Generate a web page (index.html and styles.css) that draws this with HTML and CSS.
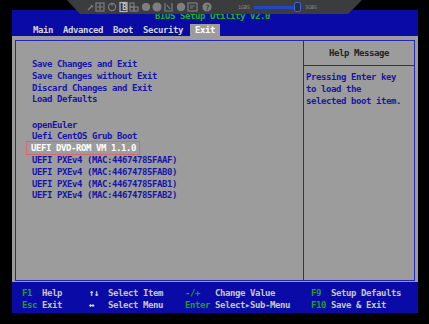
FILE: index.html
```html
<!DOCTYPE html>
<html lang="en">
<head>
    <meta charset="UTF-8">
    <meta name="viewport" content="width=device-width, initial-scale=1.0">
    <title>BIOS Setup Utility</title>
    <link rel="stylesheet" href="styles.css">
</head>
<body>
    <div class="screen">
        <header class="bios-head">
            <div class="title">BIOS Setup Utility V2.0</div>
            <nav class="tabs">
                <span class="tab">Main</span>
                <span class="tab">Advanced</span>
                <span class="tab">Boot</span>
                <span class="tab">Security</span>
                <span class="tab active">Exit</span>
            </nav>
        </header>
        <main class="bios-body">
            <div class="frame">
                <section class="menu">
                    <div class="item">Save Changes and Exit</div>
                    <div class="item">Save Changes without Exit</div>
                    <div class="item">Discard Changes and Exit</div>
                    <div class="item">Load Defaults</div>
                    <div class="gap"></div>
                    <div class="item">openEuler</div>
                    <div class="item">Uefi CentOS Grub Boot</div>
                    <div class="item"><span class="sel">UEFI DVD-ROM VM 1.1.0</span></div>
                    <div class="item">UEFI PXEv4 (MAC:44674785FAAF)</div>
                    <div class="item">UEFI PXEv4 (MAC:44674785FAB0)</div>
                    <div class="item">UEFI PXEv4 (MAC:44674785FAB1)</div>
                    <div class="item">UEFI PXEv4 (MAC:44674785FAB2)</div>
                </section>
                <aside class="help">
                    <div class="help-title">Help Message</div>
                    <div class="help-text">Pressing Enter key<br>to load the<br>selected boot item.</div>
                </aside>
            </div>
        </main>
        <footer class="keys">
            <span class="key">F1</span><span class="desc">Help</span>
            <span class="key arrow">&uarr;&darr;</span><span class="desc">Select Item</span>
            <span class="key">-/+</span><span class="desc">Change Value</span>
            <span class="key">F9</span><span class="desc">Setup Defaults</span>

            <span class="key">Esc</span><span class="desc">Exit</span>
            <span class="key arrow">&harr;</span><span class="desc">Select Menu</span>
            <span class="key">Enter</span><span class="desc">Select&#9656;Sub-Menu</span>
            <span class="key">F10</span><span class="desc">Save &amp; Exit</span>
        </footer>
    </div>

    <!-- remote console toolbar floating over the screen -->
    <div class="toolbar">
        <svg class="icons" width="130" height="12" viewBox="0 0 130 12">
            <g fill="none" stroke="#7c7e80" stroke-width="1.2">
                <path d="M2 9 L6 5 M5 4 L7 6" />
                <rect x="10" y="2" width="8" height="8" />
                <path d="M11 6 H17 M14 3 V9" />
                <circle cx="26" cy="6" r="3.6" />
                <path d="M26 2 V5" />
                <rect x="34" y="1.5" width="7" height="9" stroke="#b8b8b8" />
                <rect x="44" y="2" width="4" height="4" />
                <rect x="48" y="6" width="4" height="4" />
                <rect x="44" y="6" width="4" height="4" />
                <circle cx="60" cy="6" r="3.5" fill="#7c7e80" />
                <circle cx="71" cy="6" r="4" fill="#7c7e80" />
                <path d="M79 2 V10 H86 V2 M81 4 L84 8" />
                <circle cx="95" cy="6" r="3.6" fill="#7c7e80" />
                <rect x="102" y="2" width="9" height="8" />
                <path d="M104 5 H109 M104 7 H107" />
                <circle cx="121" cy="6" r="4" fill="#7c7e80" />
            </g>
            <text x="36.2" y="8.8" class="b-glyph">B</text>
            <text x="119.4" y="8.5" class="q-glyph">?</text>
        </svg>
        <span class="speed">1GBS</span>
        <span class="slider"><span class="track"></span><span class="knob"></span></span>
        <span class="speed">3GBS</span>
    </div>
</body>
</html>
```
FILE: styles.css
```css
body {
    margin: 0;
    background-color: #000000;
    font-family: 'DejaVu Sans Mono', 'Liberation Mono', monospace;
    font-weight: bold;
    font-size: 9px;
    letter-spacing: -0.42px;
}
.screen {
    width: 406px;
    margin: 10px 0 0 12px;
}
.bios-head {
    background-color: #0a0aa6;
    height: 26px;
}
.title {
    padding-top: 1px;
    line-height: 11px;
    text-align: center;
    color: #1bb41b;
    padding-right: 5px;
}
.tabs {
    display: flex;
    margin-top: 2px;
    padding-left: 16px;
    line-height: 12px;
}
.tab {
    padding: 0 5px;
    color: #d4d4d4;
}
.tab.active {
    background-color: #9c9c9c;
    color: #ffffff;
    margin-left: 2px;
}
.bios-body {
    background-color: #9c9c9c;
    height: 246px;
    box-sizing: border-box;
    padding: 4px 3px 1px 3px;
}
.frame {
    height: 100%;
    box-sizing: border-box;
    border: 1px solid #2626b4;
    display: grid;
    grid-template-columns: 287px 1fr;
}
.menu {
    padding: 18px 0 0 16px;
    color: #1616a8;
    line-height: 11.8px;
}
.gap {
    height: 13.4px;
}
.sel {
    color: #ffffff;
    margin-left: -5px;
    padding: 1px 3px 1px 4px;
    outline: 1px solid #d46a6a;
}
.help {
    border-left: 1px solid #2626b4;
}
.help-title {
    line-height: 24px;
    text-align: center;
    color: #222222;
    border-bottom: 1px solid #2626b4;
}
.help-text {
    padding: 6px 0 0 2px;
    line-height: 11.8px;
    color: #1616a8;
}
.keys {
    background-color: #0a0aa6;
    height: 31px;
    box-sizing: border-box;
    padding: 5px 0 2px 10px;
    display: grid;
    grid-template-columns: 20px 47px 19px 77px 30px 96px 20px 1fr;
    line-height: 12px;
}
.key {
    color: #1ea01e;
}
.key.arrow {
    color: #e8e8e8;
}
.desc {
    color: #c8c8c8;
}
.toolbar {
    position: absolute;
    left: 67px;
    top: 0;
    width: 295px;
    height: 14px;
    background-color: #3a3c3e;
    clip-path: polygon(0 0, 100% 0, 95.3% 100%, 4.4% 100%);
    display: flex;
    align-items: center;
}
.icons {
    margin-left: 19px;
}
.b-glyph {
    font-size: 8px;
    fill: #c8c8c8;
}
.q-glyph {
    font-size: 7px;
    fill: #3a3c3e;
}
.speed {
    font-size: 5px;
    letter-spacing: 0;
    color: #8a8a8a;
    font-weight: normal;
}
.speed:first-of-type {
    margin-left: 22px;
}
.slider {
    display: flex;
    align-items: center;
    margin: 0 4px;
}
.track {
    width: 40px;
    height: 3px;
    background-color: #2346c4;
}
.knob {
    width: 5px;
    height: 8px;
    border: 1px solid #3a64e0;
    border-radius: 2px;
    background-color: #2a2c30;
}
```
